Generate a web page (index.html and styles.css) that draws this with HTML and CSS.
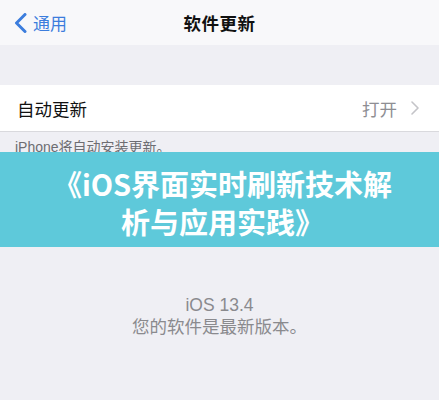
FILE: index.html
```html
<!DOCTYPE html>
<html lang="zh-CN">
<head>
    <meta charset="UTF-8">
    <meta name="viewport" content="width=device-width, initial-scale=1.0">
    <title>软件更新</title>
    <link rel="stylesheet" href="styles.css">
</head>
<body>

<!-- 顶部导航栏 -->
<header class="navbar">
    <a class="back-link" href="#">
        <svg class="back-icon" width="13" height="20" viewBox="0 0 13 20">
            <polyline points="11,1.5 2.5,10 11,18.5" fill="none" stroke="#3c7ddd" stroke-width="3" stroke-linecap="round" stroke-linejoin="round"/>
        </svg>
        <span>通用</span>
    </a>
    <h1 class="nav-title">软件更新</h1>
    <span></span>
</header>

<div class="group-gap"></div>

<div class="settings-row">
    <span class="row-label">自动更新</span>
    <span class="row-value">打开
        <svg class="row-chevron" width="8" height="14" viewBox="0 0 8 14">
            <polyline points="1,1 7,7 1,13" fill="none" stroke="#c4c4c8" stroke-width="1.6" stroke-linecap="round" stroke-linejoin="round"/>
        </svg>
    </span>
</div>
<p class="row-note">iPhone将自动安装更新。</p>

<!-- 标题横幅 -->
<div class="banner">
    <h2>《iOS界面实时刷新技术解<br>析与应用实践》</h2>
</div>

<div class="version-info">
    <p>iOS 13.4</p>
    <p>您的软件是最新版本。</p>
</div>

</body>
</html>
```

FILE: styles.css
```css
* {
    box-sizing: border-box;
}

body {
    margin: 0;
    background-color: #efeff4;
    font-family: "Liberation Sans", "Noto Sans CJK SC", sans-serif;
    color: #111;
}

.navbar {
    height: 45px;
    background-color: #f8f8fa;
    display: grid;
    grid-template-columns: 1fr auto 1fr;
    align-items: center;
}
.back-link {
    display: flex;
    align-items: center;
    padding-left: 14px;
    color: #3c7ddd;
    text-decoration: none;
    font-size: 17px;
}
.back-icon {
    margin-right: 6px;
}
.nav-title {
    margin: 0;
    font-size: 17.5px;
    font-weight: 600;
    letter-spacing: 0.5px;
}

.group-gap {
    height: 40px;
}

.settings-row {
    height: 47px;
    background-color: white;
    border-bottom: 1px solid #d9d9dd;
    display: flex;
    align-items: center;
    justify-content: space-between;
    padding: 0 20px 0 17px;
    font-size: 17.5px;
}
.row-value {
    display: flex;
    align-items: center;
    color: #8e8e93;
}
.row-chevron {
    margin-left: 14px;
}

.row-note {
    margin: 0;
    height: 20px;
    overflow: hidden;
    padding: 6px 0 0 15px;
    font-size: 14px;
    line-height: 18px;
    color: #6d6d72;
}

.banner {
    height: 95px;
    background-color: #5ec9da;
    padding: 12px 0 0 6px;
    text-align: center;
}
.banner h2 {
    margin: 0;
    color: white;
    font-family: "Noto Sans CJK SC", sans-serif;
    font-size: 29px;
    line-height: 38px;
    font-weight: 700;
}

.version-info {
    margin-top: 47px;
    text-align: center;
    color: #8a8a8e;
    font-size: 17.5px;
    line-height: 22px;
}
.version-info p {
    margin: 0;
}
```
